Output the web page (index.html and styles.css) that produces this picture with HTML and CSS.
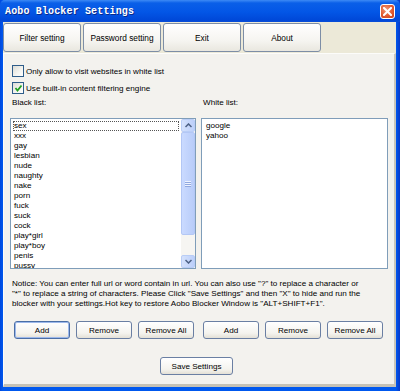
FILE: index.html
```html
<!DOCTYPE html>
<html>
<head>
<meta charset="utf-8">
<link rel="stylesheet" href="styles.css">
</head>
<body>
<div class="window">
  <div class="titlebar">
    <span class="title">Aobo Blocker Settings</span>
    <span class="close"><svg width="9" height="9" viewBox="0 0 9 9"><path d="M1 1 L8 8 M8 1 L1 8" stroke="#fff" stroke-width="2" stroke-linecap="square"/></svg></span>
  </div>
  <div class="client">
    <div class="tabs">
      <div class="tab">Filter setting</div>
      <div class="tab">Password setting</div>
      <div class="tab">Exit</div>
      <div class="tab">About</div>
    </div>
    <div class="panel">
      <label class="check row1"><span class="box"></span>Only allow to visit websites in white list</label>
      <label class="check row2"><span class="box checked"><svg width="9" height="9" viewBox="0 0 9 9"><path d="M1.5 4 L3.5 6.5 L7.5 1.5" fill="none" stroke="#21a121" stroke-width="1.8"/></svg></span>Use built-in content filtering engine</label>
      <div class="lists">
        <div class="col">
          <div class="lbl">Black list:</div>
          <div class="listbox">
            <div class="items">
              <div class="item focus">sex</div>
              <div class="item">xxx</div>
              <div class="item">gay</div>
              <div class="item">lesbian</div>
              <div class="item">nude</div>
              <div class="item">naughty</div>
              <div class="item">nake</div>
              <div class="item">porn</div>
              <div class="item">fuck</div>
              <div class="item">suck</div>
              <div class="item">cock</div>
              <div class="item">play*girl</div>
              <div class="item">play*boy</div>
              <div class="item">penis</div>
              <div class="item">pussy</div>
            </div>
            <div class="scroll">
              <div class="sbtn"><svg width="7" height="5" viewBox="0 0 7 5"><path d="M0.5 4 L3.5 1 L6.5 4" fill="none" stroke="#4d6185" stroke-width="1.5"/></svg></div>
              <div class="thumb"><span class="grip"></span></div>
              <div class="track"></div>
              <div class="sbtn"><svg width="7" height="5" viewBox="0 0 7 5"><path d="M0.5 1 L3.5 4 L6.5 1" fill="none" stroke="#4d6185" stroke-width="1.5"/></svg></div>
            </div>
          </div>
        </div>
        <div class="col right">
          <div class="lbl">White list:</div>
          <div class="listbox">
            <div class="items">
              <div class="item">google</div>
              <div class="item">yahoo</div>
            </div>
          </div>
        </div>
      </div>
      <p class="notice">Notice: You can enter full url or word contain in url. You can also use "?" to replace a character or<br>"*" to replace a string of characters. Please Click "Save Settings" and then "X" to hide and run the<br>blocker with your settings.Hot key to restore Aobo Blocker Window is "ALT+SHIFT+F1".</p>
      <div class="btnrows">
        <div class="btnrow">
          <button class="btn default">Add</button>
          <button class="btn">Remove</button>
          <button class="btn">Remove All</button>
        </div>
        <div class="btnrow">
          <button class="btn">Add</button>
          <button class="btn">Remove</button>
          <button class="btn">Remove All</button>
        </div>
      </div>
      <div class="saverow"><button class="btn save">Save Settings</button></div>
    </div>
  </div>
</div>
</body>
</html>
```
FILE: styles.css
```css
* { box-sizing: border-box; }
html, body { margin: 0; padding: 0; }
body { width: 400px; height: 391px; overflow: hidden; font-family: "Liberation Sans", Arial, sans-serif; font-size: 8.1px; color: #000; }
.window {
  width: 400px; height: 391px;
  background: linear-gradient(to right, #0048de 0, #0058ee 3px, #0058ee 396px, #0838c8 400px);
  padding: 0 4px 4px 3px;
  display: flex; flex-direction: column;
}
.titlebar {
  height: 22px; margin: 0 -4px 0 -3px; padding: 0 4px 0 5px;
  background: linear-gradient(to bottom, #3d8af5 0, #0a5fe8 3px, #0356e6 12px, #0048d8 20px, #0a4ed8 22px);
  display: flex; align-items: center; justify-content: space-between;
  border-radius: 5px 5px 0 0;
}
.title {
  font-family: "Liberation Mono", "Courier New", monospace; font-weight: bold; font-size: 10px;
  letter-spacing: 0.15px; color: #fff; text-shadow: 1px 1px 0 #0a2a8a;
}
.close {
  width: 15px; height: 15px; margin-right: 1px; border: 1px solid #fff; border-radius: 3px;
  background: radial-gradient(circle at 40% 35%, #f09a78 0, #e05a30 55%, #c8401c 100%);
  display: flex; align-items: center; justify-content: center;
}
.close svg { display: block; }
.client { flex: 1; display: flex; flex-direction: column; background: #ece9d8; }
.tabs { height: 31px; display: flex; gap: 2px; padding-top: 1px; }
.tab {
  width: 78px; height: 29px; border: 1px solid #7d8ea6; border-radius: 3px;
  background: linear-gradient(to bottom, #ffffff 0, #f6f5f1 60%, #e9e7df 100%);
  display: flex; align-items: center; justify-content: center; font-size: 8.3px;
}
.panel {
  flex: 1; background: #f3f2ee;
  border-top: 1px solid #fcfcfa; border-left: 1px solid #fcfcfa;
  border-right: 2px solid #c9c6bb; border-bottom: 3px solid #c5c2b6;
  padding: 0 7px 0 6px;
  display: flex; flex-direction: column;
}
.check { display: flex; align-items: center; height: 12px; padding-left: 2px; }
.row1 { margin-top: 11px; }
.row2 { margin-top: 5px; }
.box {
  width: 12px; height: 12px; border: 1px solid #2e5d8a; margin-right: 2px;
  background: linear-gradient(135deg, #dcdcd5 0, #f5f5f1 60%, #ffffff 100%);
  display: flex; align-items: center; justify-content: center;
}
.box svg { display: block; }
.lists { display: grid; grid-template-columns: 186px 187px; column-gap: 5px; margin-top: 4px; }
.lbl { height: 10px; line-height: 10px; padding-left: 2px; margin-bottom: 10px; }
.listbox {
  height: 151px; border: 1px solid #7f9db9; background: #fff; display: flex; overflow: hidden;
}
.items { flex: 1; padding: 2px 2px 0 2px; overflow: hidden; }
.item { height: 10px; line-height: 10px; padding-left: 1px; white-space: nowrap; }
.item.focus { outline: 1px dotted #555; outline-offset: -1px; }
.right .items { padding-left: 3px; }
.scroll { width: 14px; display: flex; flex-direction: column; background: #f6f5f2; }
.sbtn {
  height: 13px; border: 1px solid #b9cdf6; border-radius: 2px;
  background: linear-gradient(to right, #d5e2fc, #bccffa);
  display: flex; align-items: center; justify-content: center;
}
.sbtn svg { display: block; }
.thumb {
  height: 103px; border: 1px solid #b3c7f5; border-radius: 2px;
  background: linear-gradient(to right, #cadaff, #b8ccf9);
  display: flex; align-items: center; justify-content: center;
}
.grip { width: 6px; height: 6px; background: repeating-linear-gradient(to bottom, #eef3ff 0, #eef3ff 1px, #90a8e0 1px, #90a8e0 2px); }
.track { flex: 1; }
.notice { margin: 10px 0 0 2px; line-height: 10px; width: 380px; white-space: nowrap; }
.btnrows { display: grid; grid-template-columns: 186px 187px; column-gap: 5px; margin-top: 12px; }
.btnrow { display: flex; gap: 6px; padding-left: 4px; }
.btnrow + .btnrow { padding-left: 2px; }
.btn {
  font-family: "Liberation Sans", Arial, sans-serif; font-size: 8.1px; color: #000;
  width: 56px; height: 18px; padding: 0; border: 1px solid #6a7fa3; border-radius: 3px;
  background: linear-gradient(to bottom, #ffffff 0, #f4f3ee 70%, #e3e0d6 100%);
}
.btn.default { box-shadow: inset 0 0 0 1px #9db9eb; border-color: #4a6ea6; }
.saverow { display: flex; justify-content: center; margin-top: 18px; padding-right: 4px; }
.btn.save { width: 73px; }
```
